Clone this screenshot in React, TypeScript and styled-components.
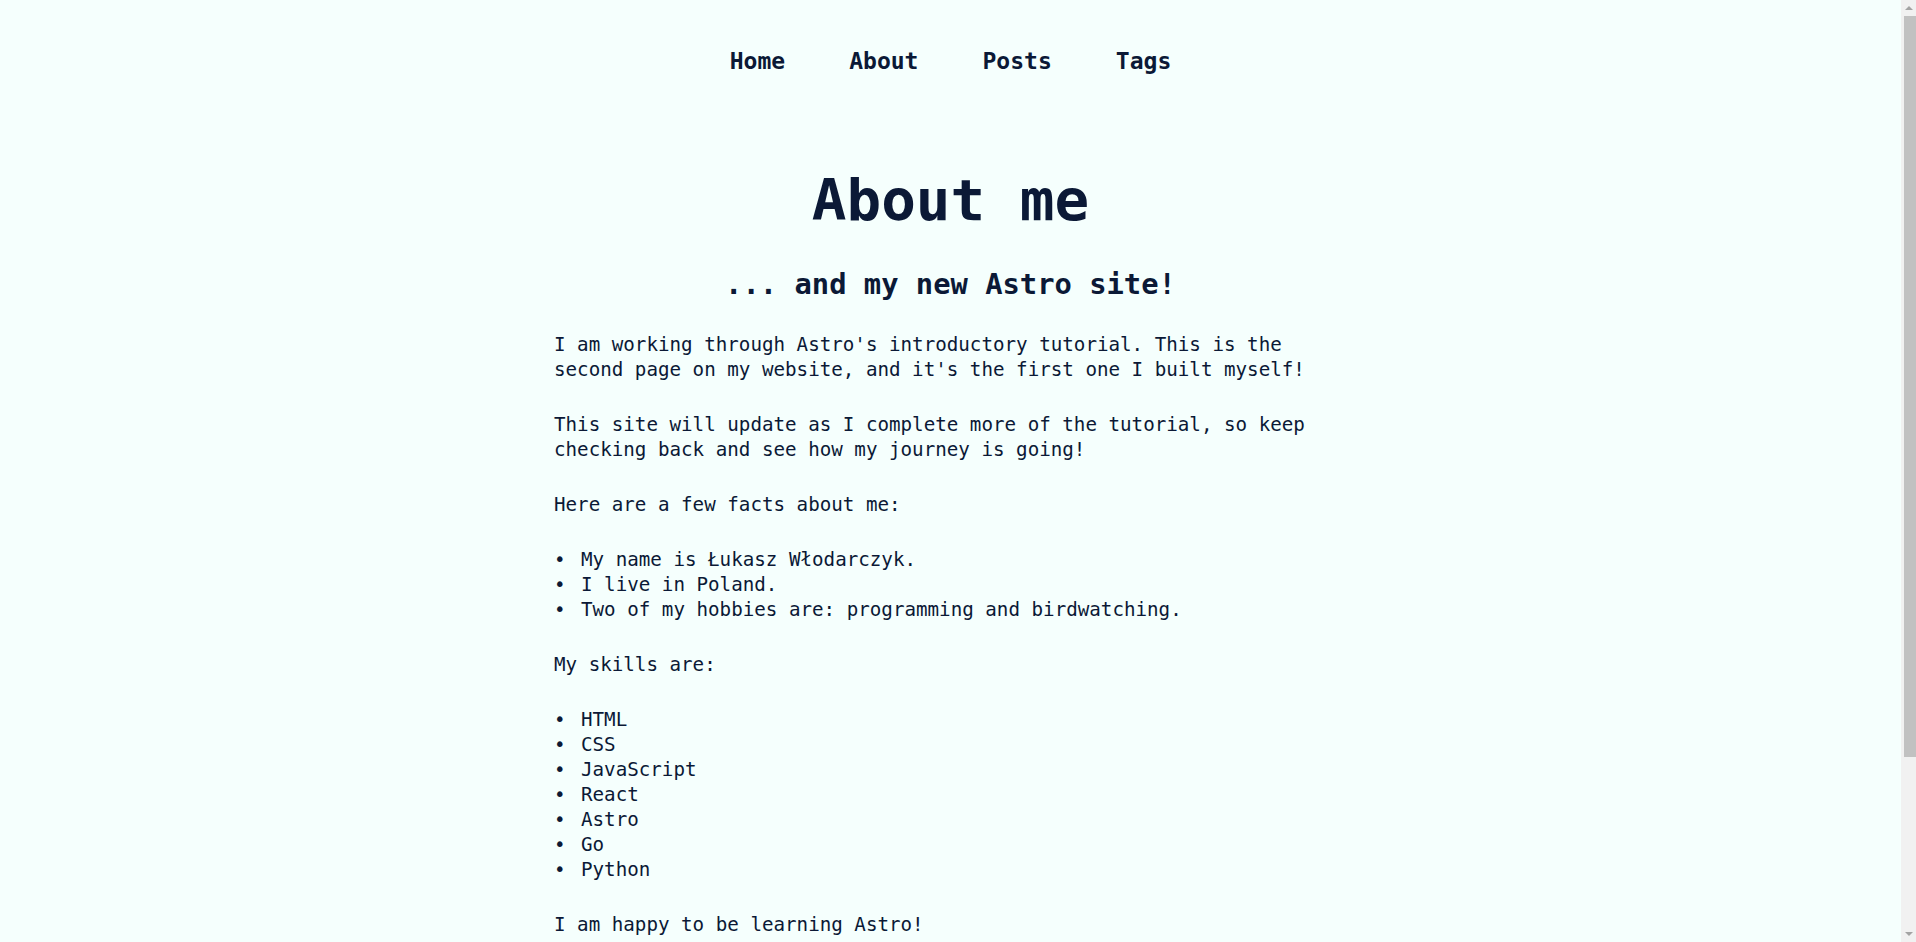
import React from "react";
import styled, { createGlobalStyle } from "styled-components";

const GlobalStyle = createGlobalStyle`
  * { box-sizing: border-box; }
  html, body {
    margin: 0;
    padding: 0;
    background: #f5fffd;
  }
  body {
    font-family: "DejaVu Sans Mono", "Liberation Mono", monospace;
    color: #0b1936;
  }
`;

const Page = styled.div`
  display: flex;
  flex-direction: column;
  align-items: center;
  padding: 47px 15px 108px 0;
`;

const Nav = styled.nav`
  display: flex;
  justify-content: center;
  gap: 64px;
`;

const NavLink = styled.a`
  font-size: 23.04px;
  line-height: 29px;
  font-weight: bold;
  color: #0b1936;
  text-decoration: none;
`;

const Title = styled.h1`
  margin: 90px 0 0;
  font-size: 57.6px;
  line-height: 69px;
  font-weight: bold;
  text-align: center;
`;

const Subtitle = styled.h2`
  margin: 32px 0 0;
  font-size: 28.8px;
  line-height: 35px;
  font-weight: bold;
  text-align: center;
`;

const Content = styled.main`
  width: 100%;
  max-width: 793px;
  margin-top: 30px;
  display: flex;
  flex-direction: column;
  gap: 30px;
  font-size: 19.2px;
  line-height: 25px;
`;

const Para = styled.p`
  margin: 0;
`;

const List = styled.ul`
  margin: 0;
  padding: 0;
  list-style: none;
`;

const Item = styled.li`
  display: flex;
  &::before {
    content: "•";
    flex: 0 0 27px;
  }
`;

const Footer = styled.footer`
  width: 100%;
  max-width: 793px;
  margin-top: 30px;
  display: flex;
  gap: 24px;
  font-size: 19.2px;
  line-height: 25px;
`;

const FooterLink = styled.a`
  color: #0b1936;
`;

/* Browser-style vertical scrollbar drawn over the right edge */
const ScrollTrack = styled.div`
  position: fixed;
  top: 0;
  right: 0;
  bottom: 0;
  width: 15px;
  background: #f1f1f1;
  display: flex;
  flex-direction: column;
  align-items: stretch;
`;

const ArrowBox = styled.div`
  flex: 0 0 16px;
  display: flex;
  align-items: center;
  justify-content: center;
`;

const Arrow = styled.div<{ $down?: boolean }>`
  width: 0;
  height: 0;
  border-left: 4px solid transparent;
  border-right: 4px solid transparent;
  ${(p) =>
    p.$down
      ? "border-top: 4px solid #a3a3a3;"
      : "border-bottom: 4px solid #a3a3a3;"}
`;

const Thumb = styled.div`
  flex: 0 0 741px;
  margin: 0 0 0 3px;
  background: #c1c1c1;
`;

const Spacer = styled.div`
  flex: 1;
`;

const facts = [
  "My name is Łukasz Włodarczyk.",
  "I live in Poland.",
  "Two of my hobbies are: programming and birdwatching.",
];

const skills = ["HTML", "CSS", "JavaScript", "React", "Astro", "Go", "Python"];

export default function App() {
  return (
    <>
      <GlobalStyle />
      <Page>
        <Nav>
          <NavLink href="#">Home</NavLink>
          <NavLink href="#">About</NavLink>
          <NavLink href="#">Posts</NavLink>
          <NavLink href="#">Tags</NavLink>
        </Nav>
        <Title>About me</Title>
        <Subtitle>... and my new Astro site!</Subtitle>
        <Content>
          <Para>
            I am working through Astro's introductory tutorial. This is the
            second page on my website, and it's the first one I built myself!
          </Para>
          <Para>
            This site will update as I complete more of the tutorial, so keep
            checking back and see how my journey is going!
          </Para>
          <Para>Here are a few facts about me:</Para>
          <List>
            {facts.map((f) => (
              <Item key={f}>{f}</Item>
            ))}
          </List>
          <Para>My skills are:</Para>
          <List>
            {skills.map((s) => (
              <Item key={s}>{s}</Item>
            ))}
          </List>
          <Para>I am happy to be learning Astro!</Para>
          <Para>My goal is to finish in 3 days.</Para>
        </Content>
        <Footer>
          <FooterLink href="#">GitHub</FooterLink>
          <FooterLink href="#">Twitter</FooterLink>
          <FooterLink href="#">Twitch</FooterLink>
        </Footer>
      </Page>
      <ScrollTrack aria-hidden="true">
        <ArrowBox>
          <Arrow />
        </ArrowBox>
        <Thumb />
        <Spacer />
        <ArrowBox>
          <Arrow $down />
        </ArrowBox>
      </ScrollTrack>
    </>
  );
}
